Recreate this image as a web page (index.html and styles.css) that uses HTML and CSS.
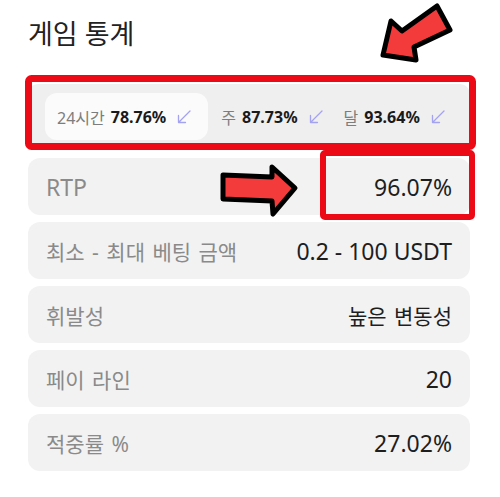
FILE: index.html
```html
<!DOCTYPE html>
<html lang="ko">
<head>
<meta charset="utf-8">
<link rel="stylesheet" href="styles.css">
</head>
<body>
<div class="page">
  <h1 class="title">게임 통계</h1>
  <div class="tabs">
    <div class="tab active"><span class="tab-label">24시간</span><span class="tab-val">78.76%</span><svg class="trend" viewBox="0 0 16 16"><path d="M14 2 L2.5 13.5 M2.5 6.5 V13.5 H9.5"/></svg></div>
    <div class="tab"><span class="tab-label">주</span><span class="tab-val">87.73%</span><svg class="trend" viewBox="0 0 16 16"><path d="M14 2 L2.5 13.5 M2.5 6.5 V13.5 H9.5"/></svg></div>
    <div class="tab"><span class="tab-label">달</span><span class="tab-val">93.64%</span><svg class="trend" viewBox="0 0 16 16"><path d="M14 2 L2.5 13.5 M2.5 6.5 V13.5 H9.5"/></svg></div>
  </div>
  <div class="rows">
    <div class="row"><span class="lbl en">RTP</span><span class="val">96.07%</span></div>
    <div class="row"><span class="lbl">최소 - 최대 베팅 금액</span><span class="val">0.2 - 100 USDT</span></div>
    <div class="row"><span class="lbl">휘발성</span><span class="val ko">높은 변동성</span></div>
    <div class="row"><span class="lbl">페이 라인</span><span class="val">20</span></div>
    <div class="row"><span class="lbl">적중률 %</span><span class="val">27.02%</span></div>
  </div>
</div>
<svg class="annot" width="500" height="497" viewBox="0 0 500 497">
  <rect x="28.5" y="78.5" width="444" height="68" rx="3" class="box"/>
  <rect x="323" y="153" width="149" height="64" rx="2" class="box box2"/>
  <polygon class="arrow" points="223,175 272,177 272,167 295,188 273,214 272,201 223,199"/>
  <polygon class="arrow" points="383,55 391,21 402,31 437,6 450,30 414,47 416,60"/>
</svg>
</body>
</html>
```
FILE: styles.css
```css
html, body {
  margin: 0;
  padding: 0;
  background: #ffffff;
}
body {
  font-family: "Noto Sans", "Noto Sans CJK KR", sans-serif;
  color: #1e1e1e;
  position: relative;
  width: 500px;
  height: 497px;
  overflow: hidden;
}
.page {
  padding: 0 30px 0 28px;
}
.title {
  margin: 0;
  padding-top: 16px;
  height: 35px;
  line-height: 35px;
  font-size: 27px;
  font-weight: 400;
  color: #222;
}
.tabs {
  margin-top: 33px;
  height: 65px;
  display: flex;
  align-items: center;
  background: #efefef;
  border-radius: 10px;
  padding-left: 17px;
}
.tab {
  display: flex;
  align-items: center;
  height: 47px;
  padding: 0 10px;
  font-size: 16px;
  white-space: nowrap;
}
.tab.active {
  background: #fbfbfb;
  border-radius: 12px;
  padding: 0 16px 0 12px;
  margin-right: 3px;
}
.tab-label {
  color: #7d7d7d;
  margin-right: 6px;
}
.tab-val {
  font-weight: 700;
  color: #1a1a1a;
}
.trend {
  width: 16px;
  height: 16px;
  margin-left: 10px;
  fill: none;
  stroke: #a3a3ef;
  stroke-width: 1.3;
  stroke-linecap: round;
  stroke-linejoin: round;
}
.rows {
  margin-top: 9px;
  display: flex;
  flex-direction: column;
  gap: 7px;
}
.row {
  height: 57px;
  display: flex;
  align-items: center;
  justify-content: space-between;
  padding: 0 18px;
  background: #f2f2f2;
  border-radius: 12px;
}
.lbl {
  font-size: 21px;
  word-spacing: 2px;
  color: #8a8a8a;
}
.lbl.en {
  font-size: 23px;
}
.val {
  font-size: 23px;
  color: #1e1e1e;
}
.val.ko {
  font-size: 21px;
  word-spacing: 2px;
}
.annot {
  position: absolute;
  left: 0;
  top: 0;
  pointer-events: none;
}
.box {
  fill: none;
  stroke: #ec0a16;
  stroke-width: 7;
}
.box2 {
  stroke-width: 6;
}
.arrow {
  fill: #f43b3b;
  stroke: #000;
  stroke-width: 5;
  stroke-linejoin: round;
}
```
